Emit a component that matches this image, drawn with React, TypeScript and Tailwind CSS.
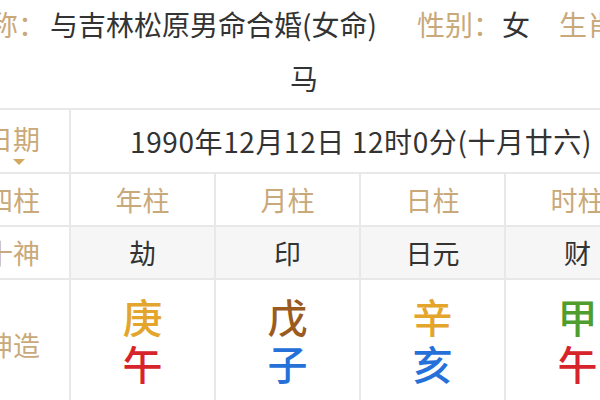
const gold = 'text-[#c9a97a]'

type Pillar = { title: string; god: string; gan: string; ganColor: string; zhi: string; zhiColor: string }

const pillars: Pillar[] = [
  { title: '年柱', god: '劫', gan: '庚', ganColor: 'text-[#e3a52c]', zhi: '午', zhiColor: 'text-[#d6242a]' },
  { title: '月柱', god: '印', gan: '戊', ganColor: 'text-[#9a5a20]', zhi: '子', zhiColor: 'text-[#2671d9]' },
  { title: '日柱', god: '日元', gan: '辛', ganColor: 'text-[#e3a52c]', zhi: '亥', zhiColor: 'text-[#2671d9]' },
  { title: '时柱', god: '财', gan: '甲', ganColor: 'text-[#4f9d2f]', zhi: '午', zhiColor: 'text-[#d6242a]' },
]

const cell = 'border-r-2 border-b-2 border-[#e8e8e8] flex flex-col items-center justify-center'

export default function App() {
  return (
    <div className="w-[600px] h-[400px] overflow-hidden bg-white text-[#333] font-['Noto_Sans_CJK_SC','Noto_Sans',sans-serif]">
      {/* Header */}
      <div className="flex items-center h-[48px] ml-[-38px] text-[28px] leading-none whitespace-nowrap">
        <span className={gold}>昵称：</span>
        <span className="ml-[4px]">与吉林松原男命合婚(女命)</span>
        <span className={`ml-[40px] ${gold}`}>性别：</span>
        <span className="ml-[1px]">女</span>
        <span className={`ml-[29px] ${gold}`}>生肖：</span>
      </div>
      <div className="flex items-center justify-center h-[60px] pl-[8px] text-[28px] leading-none">马</div>

      {/* Table */}
      <div className="ml-[-43px] w-[694px] border-t-2 border-[#e8e8e8] grid grid-cols-[114px_145px_145px_145px_145px] text-[27px] leading-none whitespace-nowrap">
        <div className={`${cell} h-[64px] ${gold}`}>
          <span className="mt-[8px]">日期</span>
          <span className="mt-[7px] ml-[12px] w-0 h-0 border-l-[6px] border-r-[6px] border-t-[6px] border-l-transparent border-r-transparent border-t-[#d4a860]" />
        </div>
        <div className={`${cell} col-span-4 h-[64px] pl-[2px] text-[28px] tracking-[0.6px]`}>1990年12月12日 12时0分(十月廿六)</div>

        <div className={`${cell} h-[53px] ${gold}`}>四柱</div>
        {pillars.map(p => (
          <div key={p.title} className={`${cell} h-[53px] ${gold}`}>{p.title}</div>
        ))}

        <div className={`${cell} h-[53px] ${gold}`}>十神</div>
        {pillars.map(p => (
          <div key={p.title} className={`${cell} h-[53px] bg-[#f6f6f6]`}>{p.god}</div>
        ))}

        <div className={`${cell} h-[130px] ${gold}`}>坤造</div>
        {pillars.map(p => (
          <div key={p.title} className={`${cell} h-[130px] text-[40px] leading-[45px] font-medium`}>
            <span className={`mb-[2px] ${p.ganColor}`}>{p.gan}</span>
            <span className={`mb-[8px] ${p.zhiColor}`}>{p.zhi}</span>
          </div>
        ))}
      </div>
    </div>
  )
}
